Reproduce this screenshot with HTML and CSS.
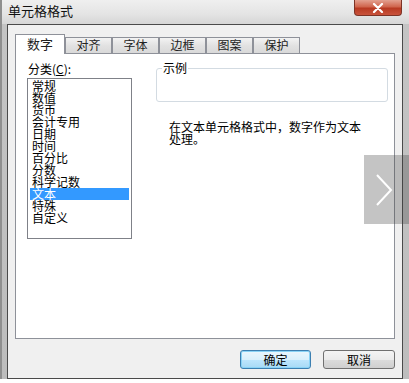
FILE: index.html
```html
<!DOCTYPE html>
<html lang="zh-CN">
<head>
  <meta charset="UTF-8">
  <title>单元格格式</title>
  <link rel="stylesheet" href="styles.css">
</head>
<body>
<div class="window">
  <div class="titlebar">
    <span class="title">单元格格式</span>
    <span class="close">
      <svg width="14" height="10" viewBox="0 0 14 10">
        <path d="M3 1 L11 9 M11 1 L3 9" stroke="#fff" stroke-width="2.2" stroke-linecap="round" />
      </svg>
    </span>
  </div>

  <div class="dialog">
    <div class="tabs">
      <span class="tab active">数字</span>
      <span class="tab">对齐</span>
      <span class="tab">字体</span>
      <span class="tab">边框</span>
      <span class="tab">图案</span>
      <span class="tab">保护</span>
    </div>

    <div class="panel">
      <div class="category">
        <div class="label">分类(<u>C</u>):</div>
        <ul class="list">
          <li>常规</li>
          <li>数值</li>
          <li>货币</li>
          <li>会计专用</li>
          <li>日期</li>
          <li>时间</li>
          <li>百分比</li>
          <li>分数</li>
          <li>科学记数</li>
          <li class="selected">文本</li>
          <li>特殊</li>
          <li>自定义</li>
        </ul>
      </div>

      <div class="details">
        <fieldset class="sample">
          <legend>示例</legend>
        </fieldset>
        <p class="desc">在文本单元格格式中，数字作为文本<br>处理。</p>
      </div>
    </div>

    <div class="buttons">
      <button class="btn default">确定</button>
      <button class="btn">取消</button>
    </div>
  </div>
</div>

<div class="pager">
  <svg width="20" height="34" viewBox="0 0 20 34">
    <path d="M3 2 L17 17 L3 32" fill="none" stroke="#fff" stroke-width="2" />
  </svg>
</div>
</body>
</html>
```

FILE: styles.css
```css
body {
  margin: 0;
  width: 409px;
  height: 383px;
  background: #fff;
  font-family: 'Noto Sans CJK SC', 'Liberation Sans', sans-serif;
  font-size: 12px;
  color: #000;
  overflow: hidden;
}

.window {
  box-sizing: border-box;
  width: 409px;
  height: 379px;
  padding: 0 6px 0 5px;
  background: linear-gradient(to bottom, #efefef 0, #e4e4e4 14px, #d6d6d6 24px, #c4c4c4 24px, #bdbdbd 100%);
  border-left: 2px solid #8f8f8f;
}

/* title bar */
.titlebar {
  display: flex;
  justify-content: space-between;
  align-items: flex-start;
  height: 24px;
}

.title {
  padding: 3px 0 0 1px;
  font-size: 13px;
  line-height: 16px;
  color: #111;
}

.close {
  display: flex;
  align-items: center;
  justify-content: center;
  width: 46px;
  height: 15px;
  margin-right: 1px;
  background: linear-gradient(to bottom, #e3a190 0, #d0654d 45%, #b83a22 55%, #c9533c 100%);
  border: 1px solid #7d3326;
  border-top: 0;
  border-radius: 0 0 4px 4px;
}

/* dialog body */
.dialog {
  box-sizing: border-box;
  height: 355px;
  padding: 9px 7px 0 7px;
  background: #f0f0f0;
  border: 1px solid #4a4a4a;
}

.tabs {
  display: flex;
  align-items: flex-end;
  height: 19px;
}

.tab {
  box-sizing: border-box;
  width: 47px;
  height: 16px;
  line-height: 14px;
  text-align: center;
  background: linear-gradient(to bottom, #f3f3f3, #e2e2e2 50%, #d9d9d9);
  border: 1px solid #8e9199;
  border-bottom: 0;
  color: #222;
}

.tab.active {
  position: relative;
  z-index: 1;
  width: 50px;
  height: 20px;
  margin-bottom: -1px;
  line-height: 18px;
  font-size: 13px;
  background: #fff;
}

.panel {
  box-sizing: border-box;
  display: flex;
  width: 380px;
  height: 286px;
  padding: 8px 0 0 11px;
  background: #fff;
  border: 1px solid #8e9199;
}

.label {
  height: 14px;
  line-height: 14px;
  margin: 0 0 2px 1px;
}

.list {
  box-sizing: border-box;
  width: 105px;
  height: 161px;
  margin: 0;
  padding: 1px 2px;
  list-style: none;
  border: 1px solid #7f8188;
}

.list li {
  height: 12px;
  line-height: 12px;
  padding-left: 2px;
  font-size: 12px;
}

.list .selected {
  background: #3399ff;
  color: #fff;
}

.details {
  margin-left: 24px;
}

.sample {
  box-sizing: border-box;
  width: 232px;
  height: 40px;
  margin: 0;
  padding: 0;
  border: 1px solid #d3dbe2;
  border-radius: 3px;
}

.sample legend {
  margin-left: 5px;
  padding: 0 1px;
  line-height: 12px;
}

.desc {
  margin: 19px 0 0 13px;
  line-height: 12px;
}

.buttons {
  display: flex;
  justify-content: flex-end;
  gap: 12px;
  margin-top: 11px;
}

.btn {
  box-sizing: border-box;
  width: 72px;
  height: 19px;
  padding: 0;
  font-family: inherit;
  font-size: 12px;
  line-height: 16px;
  color: #000;
  background: linear-gradient(to bottom, #f4f4f4, #ebebeb 50%, #dcdcdc 51%, #cfcfcf);
  border: 1px solid #707070;
  border-radius: 3px;
}

.btn.default {
  width: 71px;
  background: linear-gradient(to bottom, #eaf6fd, #d9f0fc 50%, #bee6fd 51%, #a7d9f5);
  border-color: #3c7fb1;
  box-shadow: inset 0 0 0 1px #8ad3f6;
}

/* slideshow arrow over the screenshot */
.pager {
  position: absolute;
  left: 364px;
  top: 155px;
  width: 45px;
  height: 69px;
  display: flex;
  align-items: center;
  padding-left: 10px;
  box-sizing: border-box;
  background: rgba(60, 60, 60, 0.3);
}
```
